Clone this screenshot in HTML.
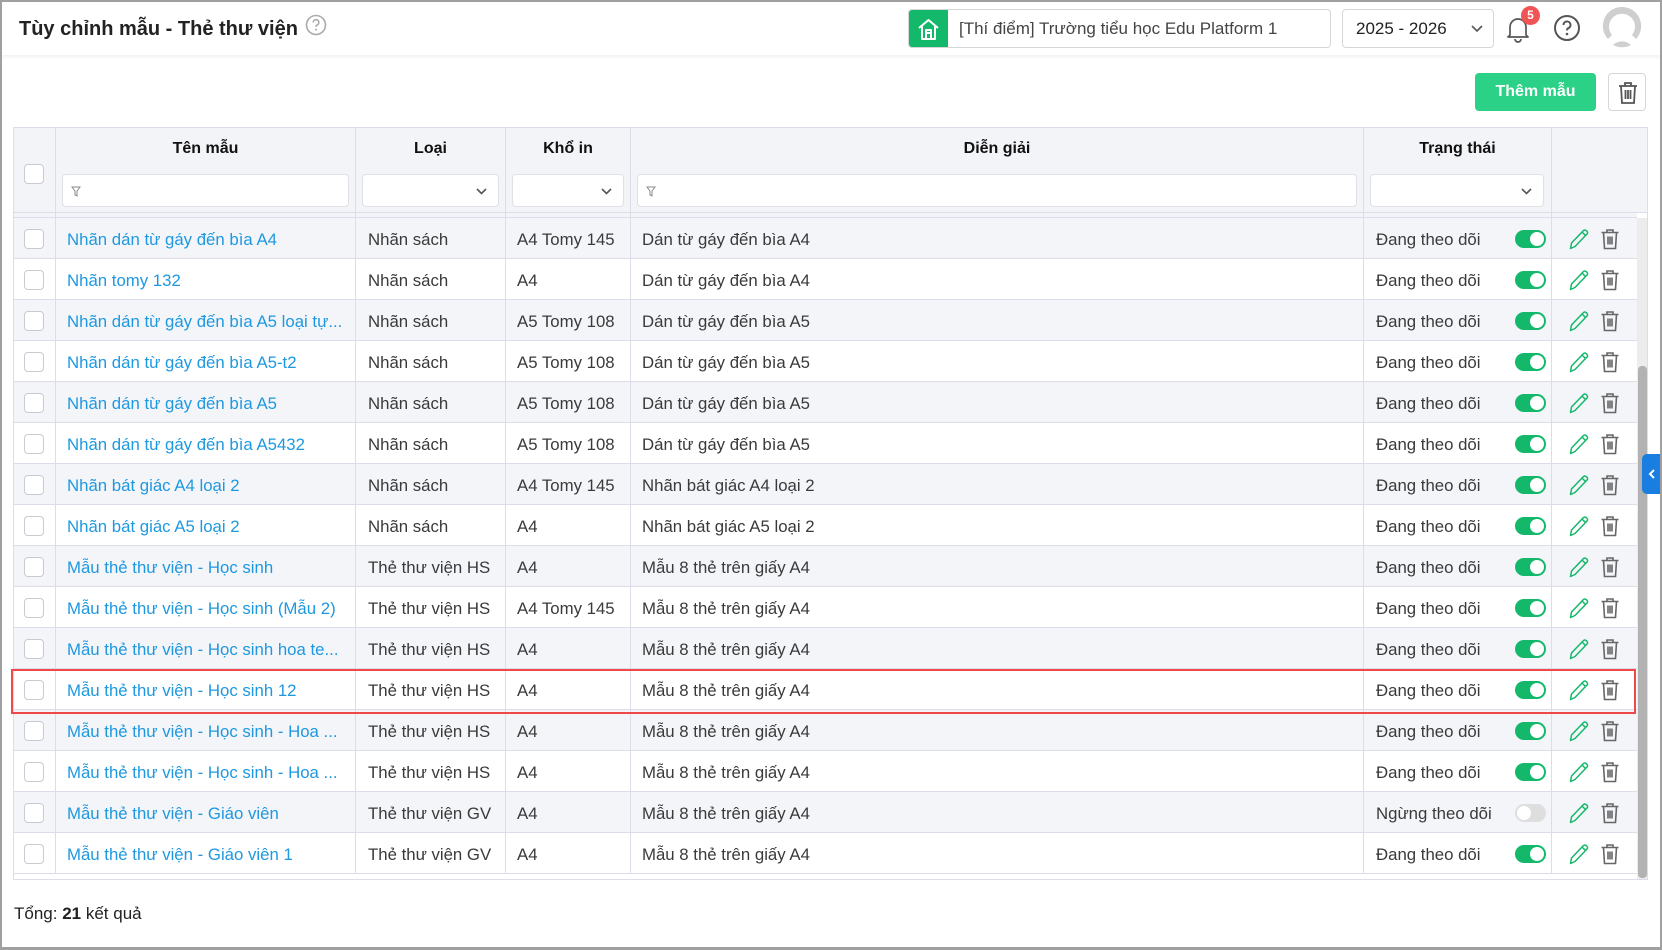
<!DOCTYPE html>
<html><head><meta charset="utf-8"><style>
*{box-sizing:border-box;margin:0;padding:0}
body{width:1662px;height:950px;overflow:hidden;background:#fff;font-family:"Liberation Sans",Arial,sans-serif;color:#333;position:relative}
.frame{position:absolute;inset:0;border:2px solid #a0a0a0;border-bottom-width:3px;z-index:50;pointer-events:none}
.hdr{position:absolute;left:0;top:0;width:1662px;height:55px;background:#fff;box-shadow:0 2px 4px rgba(0,0,0,.06)}
.abs{position:absolute}
.t{font-size:17px;white-space:nowrap;position:absolute}
.row{position:absolute;left:14px;width:1623px;height:41px;border-bottom:1px solid #dcdde8}
.cell{position:absolute;top:0;height:41px;border-right:1px solid #dcdde8}
.cb{position:absolute;left:10px;top:11px;width:20px;height:20px;border:1px solid #c9cbd2;border-radius:4px;background:#fff}
.txt{position:absolute;top:12px;font-size:16.8px;white-space:nowrap;color:#3a3a3a}
.lk{color:#1e98e0}
.tg{position:absolute;left:1501px;top:12px;width:31px;height:18px;border-radius:9px;background:#13b86a}
.tg::after{content:"";position:absolute;right:2px;top:2px;width:14px;height:14px;border-radius:50%;background:#fff}
.tg.off{background:#dedede}
.tg.off::after{left:2px;right:auto}
.in{position:absolute;top:174px;height:33px;background:#fff;border:1px solid #dfe1e6;border-radius:4px}
.th{position:absolute;top:140px;font-weight:bold;font-size:16px;color:#111;text-align:center}
</style></head><body>
<div class="frame"></div>
<div class="hdr">
 <div class="t" style="left:19px;top:18px;font-size:20px;font-weight:bold;color:#222">Tùy chỉnh mẫu - Thẻ thư viện</div>
 <svg class="abs" style="left:305px;top:14px" width="22" height="22" viewBox="0 0 22 22"><circle cx="11" cy="11" r="9.5" fill="none" stroke="#aaa" stroke-width="1.6"/><path d="M8.2 8.5a2.8 2.8 0 1 1 3.8 2.6c-.8.4-1 .9-1 1.8" fill="none" stroke="#aaa" stroke-width="1.6"/><circle cx="11" cy="15.6" r="1" fill="#aaa"/></svg>
 <div class="abs" style="left:908px;top:9px;width:423px;height:39px;border:1px solid #d6d6d6;border-radius:4px;overflow:hidden">
  <div class="abs" style="left:0;top:0;width:39px;height:39px;background:#13b86a"></div>
  <svg class="abs" style="left:7px;top:7px" width="25" height="25" viewBox="0 0 25 25"><path d="M3 11L12.5 3 22 11M6 9v13h13V9M10 22v-9h5v9M10 16h5" fill="none" stroke="#fff" stroke-width="2" stroke-linejoin="round"/></svg>
  <div class="t" style="left:50px;top:9px;color:#444">[Thí điểm] Trường tiểu học Edu Platform 1</div>
 </div>
 <div class="abs" style="left:1342px;top:9px;width:152px;height:39px;border:1px solid #d6d6d6;border-radius:4px">
  <div class="t" style="left:13px;top:9px;color:#222">2025 - 2026</div>
  <svg class="abs" style="left:128px;top:15px" width="12" height="8" viewBox="0 0 12 8"><path d="M1 1l5 5 5-5" fill="none" stroke="#555" stroke-width="1.6"/></svg>
 </div>
 <svg class="abs" style="left:1504px;top:13px" width="28" height="30" viewBox="0 0 28 30"><path d="M6 22V14a8 8 0 0 1 16 0v8l2 2H4z M11 26a3 3 0 0 0 6 0" fill="none" stroke="#555" stroke-width="1.7" stroke-linejoin="round"/></svg>
 <div class="abs" style="left:1521px;top:6px;width:19px;height:19px;border-radius:50%;background:#f05454;color:#fff;font-size:12px;font-weight:bold;text-align:center;line-height:19px">5</div>
 <svg class="abs" style="left:1553px;top:14px" width="28" height="28" viewBox="0 0 28 28"><circle cx="14" cy="14" r="12" fill="none" stroke="#555" stroke-width="2"/><path d="M10.5 11a3.5 3.5 0 1 1 4.8 3.2c-1 .5-1.3 1.1-1.3 2.2" fill="none" stroke="#555" stroke-width="2"/><circle cx="14" cy="20" r="1.3" fill="#555"/></svg>
 <svg class="abs" style="left:1601px;top:5px" width="42" height="44" viewBox="0 0 42 44"><path d="M21 2a19 19 0 0 0-14 32l4-4a13 13 0 1 1 20 0l4 4A19 19 0 0 0 21 2z" fill="#cfcfcf"/><path d="M12 40a13 13 0 0 1 18 0 19 19 0 0 1-18 0z" fill="#cfcfcf"/></svg>
</div>

<div class="abs" style="left:1475px;top:73px;width:121px;height:38px;background:#2ad186;border-radius:4px;color:#fff;font-weight:bold;font-size:16px;text-align:center;line-height:38px">Thêm mẫu</div>
<div class="abs" style="left:1608px;top:73px;width:38px;height:38px;border:1px solid #d6d6d6;border-radius:4px">
 <svg class="abs" style="left:8px;top:7px" width="22" height="24" viewBox="0 0 22 24"><path d="M2 5h18M8 5V2h6v3M4 5l1 17h12l1-17M8.5 9v9M11 9v9M13.5 9v9" fill="none" stroke="#555" stroke-width="1.8"/></svg>
</div>

<div class="abs" style="left:13px;top:127px;width:1635px;height:753px;border:1px solid #dcdde8;background:#fff"></div>
<div class="abs" style="left:14px;top:128px;width:1633px;height:85px;background:#f3f4f8;border-bottom:1px solid #dcdde8"></div>
<div class="abs" style="left:14px;top:213px;width:1623px;height:5px;background:#f3f4f8;border-bottom:1px solid #dcdde8"></div>
<div class="abs" style="left:1637px;top:218px;width:10px;height:661px;background:#ececec"></div>
<div class="abs" style="left:1638px;top:366px;width:9px;height:512px;background:#b2b2b2;border-radius:4px"></div>
<div class="abs" style="left:55px;top:128px;width:1px;height:90px;background:#dcdde8"></div>
<div class="abs" style="left:355px;top:128px;width:1px;height:90px;background:#dcdde8"></div>
<div class="abs" style="left:505px;top:128px;width:1px;height:90px;background:#dcdde8"></div>
<div class="abs" style="left:630px;top:128px;width:1px;height:90px;background:#dcdde8"></div>
<div class="abs" style="left:1363px;top:128px;width:1px;height:90px;background:#dcdde8"></div>
<div class="abs" style="left:1551px;top:128px;width:1px;height:90px;background:#dcdde8"></div>
<div class="abs" style="left:24px;top:164px;width:20px;height:20px;border:1px solid #c9cbd2;border-radius:4px;background:#fff"></div>
<div class="th" style="left:56px;width:299px">Tên mẫu</div>
<div class="th" style="left:356px;width:149px">Loại</div>
<div class="th" style="left:506px;width:124px">Khổ in</div>
<div class="th" style="left:631px;width:732px">Diễn giải</div>
<div class="th" style="left:1364px;width:187px">Trạng thái</div>
<div class="in" style="left:62px;width:287px"><svg class="abs" style="left:8px;top:11px" width="10" height="11" viewBox="0 0 10 11"><path d="M1 1h8L6 5v5L4 9V5z" fill="none" stroke="#888" stroke-width="1"/></svg></div>
<div class="in" style="left:362px;width:137px"><svg class="abs" style="left:113px;top:13px" width="11" height="7" viewBox="0 0 11 7"><path d="M1 1l4.5 4.5L10 1" fill="none" stroke="#555" stroke-width="1.6"/></svg></div>
<div class="in" style="left:512px;width:112px"><svg class="abs" style="left:88px;top:13px" width="11" height="7" viewBox="0 0 11 7"><path d="M1 1l4.5 4.5L10 1" fill="none" stroke="#555" stroke-width="1.6"/></svg></div>
<div class="in" style="left:637px;width:720px"><svg class="abs" style="left:8px;top:11px" width="10" height="11" viewBox="0 0 10 11"><path d="M1 1h8L6 5v5L4 9V5z" fill="none" stroke="#888" stroke-width="1"/></svg></div>
<div class="in" style="left:1370px;width:174px"><svg class="abs" style="left:150px;top:13px" width="11" height="7" viewBox="0 0 11 7"><path d="M1 1l4.5 4.5L10 1" fill="none" stroke="#555" stroke-width="1.6"/></svg></div>

<div id="rows"></div>
<div class="abs" style="left:11px;top:669px;width:1625px;height:45px;border:2px solid #f04848;z-index:5"></div>
<div class="abs" style="left:1642px;top:454px;width:20px;height:40px;background:#1a7de0;border-radius:5px 0 0 5px;z-index:10"><svg class="abs" style="left:6px;top:15px" width="8" height="10" viewBox="0 0 8 10"><path d="M6 1L2 5l4 4" fill="none" stroke="#fff" stroke-width="2"/></svg></div>
<div class="t" style="left:14px;top:904px;color:#222">Tổng: <b>21</b> kết quả</div>

<script>
var d=[
["Nhãn dán từ gáy đến bìa A4","Nhãn sách","A4 Tomy 145","Dán từ gáy đến bìa A4",1],
["Nhãn tomy 132","Nhãn sách","A4","Dán từ gáy đến bìa A4",1],
["Nhãn dán từ gáy đến bìa A5 loại tự...","Nhãn sách","A5 Tomy 108","Dán từ gáy đến bìa A5",1],
["Nhãn dán từ gáy đến bìa A5-t2","Nhãn sách","A5 Tomy 108","Dán từ gáy đến bìa A5",1],
["Nhãn dán từ gáy đến bìa A5","Nhãn sách","A5 Tomy 108","Dán từ gáy đến bìa A5",1],
["Nhãn dán từ gáy đến bìa A5432","Nhãn sách","A5 Tomy 108","Dán từ gáy đến bìa A5",1],
["Nhãn bát giác A4 loại 2","Nhãn sách","A4 Tomy 145","Nhãn bát giác A4 loại 2",1],
["Nhãn bát giác A5 loại 2","Nhãn sách","A4","Nhãn bát giác A5 loại 2",1],
["Mẫu thẻ thư viện - Học sinh","Thẻ thư viện HS","A4","Mẫu 8 thẻ trên giấy A4",1],
["Mẫu thẻ thư viện - Học sinh (Mẫu 2)","Thẻ thư viện HS","A4 Tomy 145","Mẫu 8 thẻ trên giấy A4",1],
["Mẫu thẻ thư viện - Học sinh hoa te...","Thẻ thư viện HS","A4","Mẫu 8 thẻ trên giấy A4",1],
["Mẫu thẻ thư viện - Học sinh 12","Thẻ thư viện HS","A4","Mẫu 8 thẻ trên giấy A4",1],
["Mẫu thẻ thư viện - Học sinh - Hoa ...","Thẻ thư viện HS","A4","Mẫu 8 thẻ trên giấy A4",1],
["Mẫu thẻ thư viện - Học sinh - Hoa ...","Thẻ thư viện HS","A4","Mẫu 8 thẻ trên giấy A4",1],
["Mẫu thẻ thư viện - Giáo viên","Thẻ thư viện GV","A4","Mẫu 8 thẻ trên giấy A4",0],
["Mẫu thẻ thư viện - Giáo viên 1","Thẻ thư viện GV","A4","Mẫu 8 thẻ trên giấy A4",1]];
var pen='<svg style="position:absolute;left:1553px;top:9px" width="24" height="24" viewBox="0 0 24 24"><path d="M3.5 21.5l1-5.5L16.5 3.5a1.8 1.8 0 0 1 2.6 0l.9.9a1.8 1.8 0 0 1 0 2.6L8 19.5zM15 5l3.5 3.5" fill="none" stroke="#13b86a" stroke-width="1.5" stroke-linejoin="round"/></svg>';
var tr='<svg style="position:absolute;left:1586px;top:10px" width="20" height="22" viewBox="0 0 20 22"><path d="M1.5 4.5h17M7 4.5V2h6v2.5M3.5 4.5l1 16h11l1-16M8 8.5v8M10 8.5v8M12 8.5v8" fill="none" stroke="#666" stroke-width="1.6"/></svg>';
var h='';
d.forEach(function(r,i){
 var y=218+i*41;
 h+='<div class="row" style="top:'+y+'px;background:'+(i%2==0?'#f4f5f9':'#fff')+'">'+
 '<div class="cell" style="left:0;width:42px"></div><div class="cb"></div>'+
 '<div class="cell" style="left:42px;width:300px"></div>'+
 '<div class="cell" style="left:342px;width:150px"></div>'+
 '<div class="cell" style="left:492px;width:125px"></div>'+
 '<div class="cell" style="left:617px;width:733px"></div>'+
 '<div class="cell" style="left:1350px;width:188px"></div>'+
 '<div class="txt lk" style="left:53px">'+r[0]+'</div>'+
 '<div class="txt" style="left:354px">'+r[1]+'</div>'+
 '<div class="txt" style="left:503px">'+r[2]+'</div>'+
 '<div class="txt" style="left:628px">'+r[3]+'</div>'+
 '<div class="txt" style="left:1362px">'+(r[4]?'Đang theo dõi':'Ngừng theo dõi')+'</div>'+
 '<div class="tg'+(r[4]?'':' off')+'"></div>'+pen+tr+'</div>';
});
document.getElementById('rows').innerHTML=h;
</script>
</body></html>
